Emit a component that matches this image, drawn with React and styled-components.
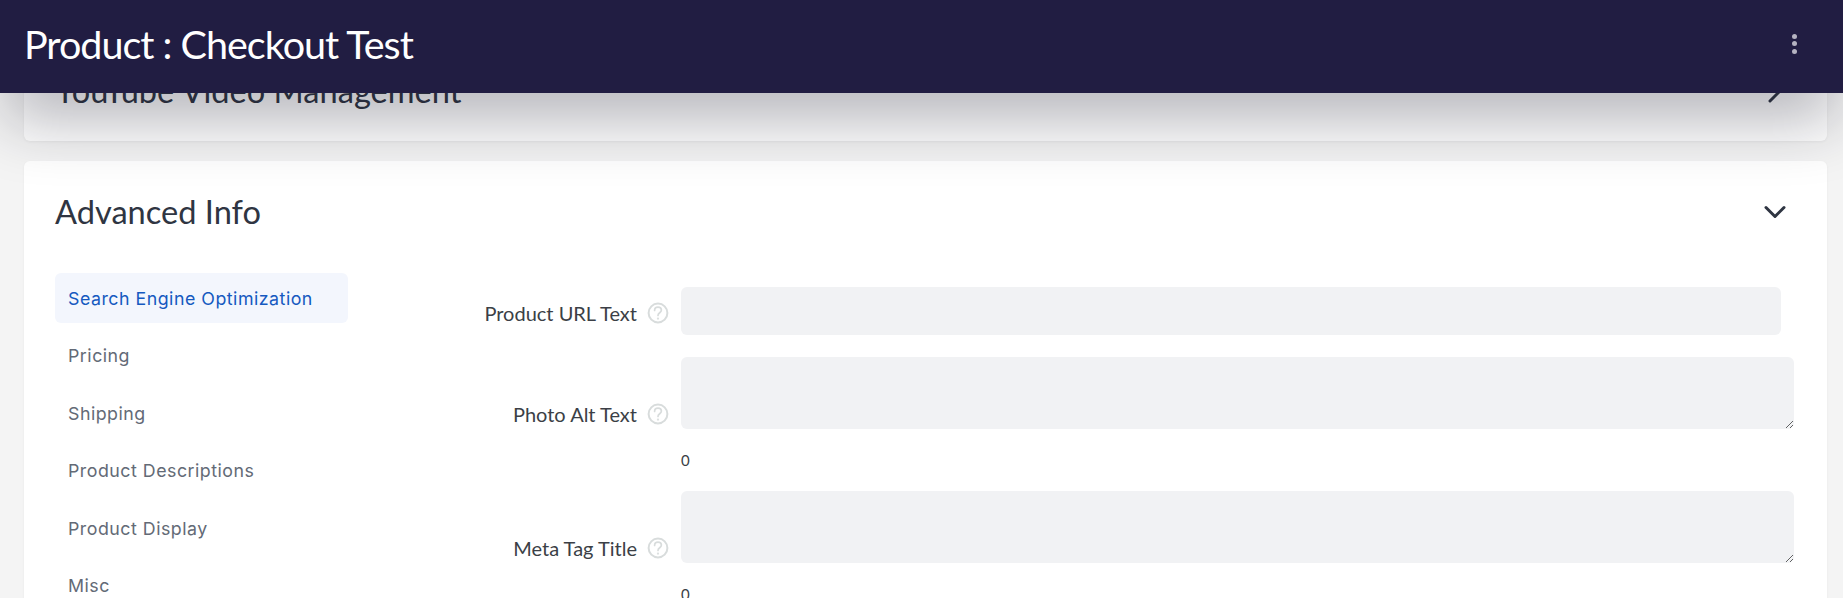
import React from "react";
import styled, { createGlobalStyle } from "styled-components";

const Global = createGlobalStyle`
  html, body { margin: 0; padding: 0; height: 100%; overflow: hidden; background: #f4f4f4; }
  body { font-family: Lato, "Liberation Sans", sans-serif; }
  * { box-sizing: border-box; }
`;

const Page = styled.div`
  position: relative;
  height: 598px;
  overflow: hidden;
  padding: 41px 16px 0 24px;
  background: #f4f4f4;
`;

const TopBar = styled.header`
  position: absolute;
  inset: 0 0 auto 0;
  z-index: 5;
  height: 93px;
  padding: 0 46px 6px 24px;
  display: flex;
  align-items: center;
  justify-content: space-between;
  background: #211d42;
  box-shadow: 0 32px 64px -6px rgba(20, 20, 40, 0.33);
`;

const PageTitle = styled.h1`
  margin: 0;
  color: #fff;
  font: 400 39.5px/1 Lato, sans-serif;
  letter-spacing: -1px;
`;

const Kebab = styled.button`
  display: flex;
  flex-direction: column;
  gap: 2.5px;
  padding: 0;
  border: 0;
  background: none;
  span {
    width: 5px;
    height: 5px;
    border-radius: 50%;
    background: #b5b3c1;
  }
`;

const Card = styled.section`
  background: #fff;
  border-radius: 6px;
  box-shadow: 0 1px 3px rgba(0, 0, 0, 0.05);
  margin-bottom: 20px;
  padding: 0 31px;
`;

const CardHead = styled.div`
  display: flex;
  align-items: center;
  justify-content: space-between;
  height: ${(p) => p.$h}px;
  padding-right: 10px;
`;

const CardTitle = styled.h2`
  margin: 0;
  color: #2f3542;
  font: 400 32.6px/1 Lato, sans-serif;
`;

const CollapsedCard = styled(Card)`
  height: 100px;
`;

const Body = styled.div`
  display: flex;
  padding-top: 10px;
  height: 400px;
`;

const SideNav = styled.nav`
  width: 293px;
  flex: none;
  display: flex;
  flex-direction: column;
`;

const NavItem = styled.a`
  display: flex;
  align-items: center;
  height: 50px;
  margin-bottom: 7.5px;
  padding: 1.4px 13px 0;
  border-radius: 6px;
  font: 400 17.8px/1 Inter, "Open Sans", sans-serif;
  letter-spacing: 0.5px;
  color: ${(p) => (p.$active ? "#1559c0" : "#636a76")};
  background: ${(p) => (p.$active ? "#f3f6fd" : "transparent")};
`;

const Form = styled.div`
  flex: 1;
  padding-top: 14px;
  display: flex;
  flex-direction: column;
`;

const Row = styled.div`
  display: flex;
  margin-bottom: ${(p) => p.$gap}px;
`;

const LabelCell = styled.div`
  width: 333px;
  flex: none;
  height: 24px;
  margin-top: ${(p) => p.$top - 12}px;
  display: flex;
  align-items: center;
  justify-content: flex-end;
  gap: 10px;
  padding-right: 12px;
`;

const Label = styled.label`
  font: 400 20px/24px Lato, sans-serif;
  color: #3b3f46;
`;

const HelpIcon = styled.svg`
  margin-bottom: 1px;
`;

const FieldCol = styled.div`
  flex: 1;
`;

const TextInput = styled.input`
  display: block;
  width: 1100px;
  height: 48px;
  border: 0;
  border-radius: 6px;
  background: #f1f2f4;
  outline: 0;
`;

const TextArea = styled.textarea`
  display: block;
  width: 1113px;
  height: 72px;
  border: 0;
  border-radius: 6px;
  background: #f1f2f4;
  outline: 0;
  resize: vertical;
`;

const Counter = styled.div`
  font: 400 15px/22px Lato, sans-serif;
  color: #3b3f46;
  margin-top: 20px;
`;

const Help = () => (
  <HelpIcon width="22" height="22" viewBox="0 0 22 22" fill="none" stroke="#d8dcdc" strokeWidth="2" strokeLinecap="round">
    <circle cx="11" cy="11" r="9.4" />
    <path d="M7.6 8.4c0-2 1.5-3.3 3.4-3.3s3.4 1.2 3.4 3c0 2.7-3.4 2.6-3.4 5.3" strokeWidth="1.7" />
    <circle cx="11" cy="16.6" r="0.4" fill="#d8dcdc" strokeWidth="1.5" />
  </HelpIcon>
);

const Chevron = ({ dir }) => (
  <svg width="22" height="14" viewBox="0 0 22 14" fill="none" stroke="#2f3542" strokeWidth="3" strokeLinecap="round" strokeLinejoin="round" overflow="visible">
    <path d={dir === "down" ? "M2 2.5l9 9 9-9" : "M6 -3l10 10-10 10"} />
  </svg>
);

const nav = ["Search Engine Optimization", "Pricing", "Shipping", "Product Descriptions", "Product Display", "Misc"];

export default function App() {
  return (
    <>
      <Global />
      <Page>
        <TopBar>
          <PageTitle>Product : Checkout Test</PageTitle>
          <Kebab aria-label="More">
            <span />
            <span />
            <span />
          </Kebab>
        </TopBar>

        <CollapsedCard>
          <CardHead $h={100}>
            <CardTitle>YouTube Video Management</CardTitle>
            <Chevron dir="right" />
          </CardHead>
        </CollapsedCard>

        <Card>
          <CardHead $h={102}>
            <CardTitle>Advanced Info</CardTitle>
            <Chevron dir="down" />
          </CardHead>
          <Body>
            <SideNav>
              {nav.map((n, i) => (
                <NavItem key={n} $active={i === 0}>{n}</NavItem>
              ))}
            </SideNav>
            <Form>
              <Row $gap={22}>
                <LabelCell $top={26}>
                  <Label>Product URL Text</Label>
                  <Help />
                </LabelCell>
                <FieldCol>
                  <TextInput />
                </FieldCol>
              </Row>
              <Row $gap={20}>
                <LabelCell $top={57}>
                  <Label>Photo Alt Text</Label>
                  <Help />
                </LabelCell>
                <FieldCol>
                  <TextArea />
                  <Counter>0</Counter>
                </FieldCol>
              </Row>
              <Row $gap={20}>
                <LabelCell $top={57}>
                  <Label>Meta Tag Title</Label>
                  <Help />
                </LabelCell>
                <FieldCol>
                  <TextArea />
                  <Counter>0</Counter>
                </FieldCol>
              </Row>
            </Form>
          </Body>
        </Card>
      </Page>
    </>
  );
}
